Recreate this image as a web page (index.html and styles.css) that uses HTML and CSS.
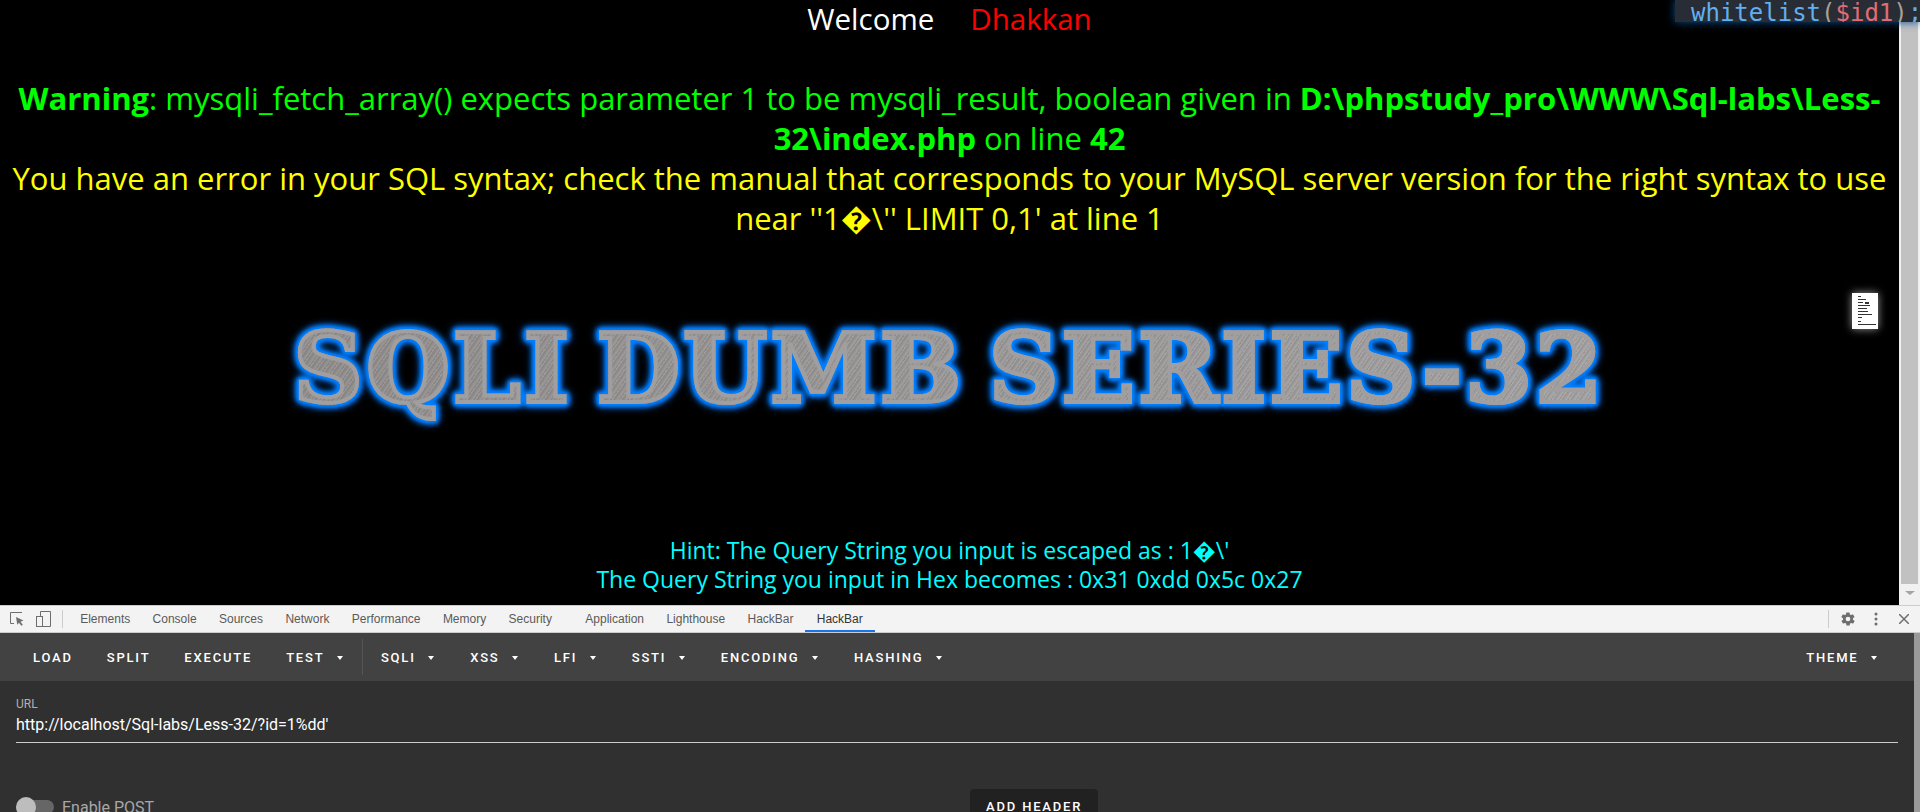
FILE: index.html
```html
<!DOCTYPE html>
<html lang="en">
<head>
    <meta charset="UTF-8">
    <title>Less-32</title>
    <link rel="stylesheet" href="styles.css">
</head>
<body>
    <div class="page">
        <div class="content">
            <p class="welcome"><span class="white">Welcome</span><span class="red">Dhakkan</span></p>
            <div class="messages">
                <p class="green"><b>Warning</b>: mysqli_fetch_array() expects parameter 1 to be mysqli_result, boolean given in <b>D:\phpstudy_pro\WWW\Sql-labs\Less-32\index.php</b> on line <b>42</b></p>
                <p class="yellow">You have an error in your SQL syntax; check the manual that corresponds to your MySQL server version for the right syntax to use near ''1�\'' LIMIT 0,1' at line 1</p>
            </div>
            <div class="logo"><span>SQLI DUMB SERIES-32</span></div>
            <p class="hint">Hint: The Query String you input is escaped as : 1�\'<br>The Query String you input in Hex becomes : 0x31 0xdd 0x5c 0x27</p>
        </div>
        <div class="scrollbar"><div class="thumb-v"></div><div class="arrow-down"></div></div>
        <div class="code-scrap">whitelist<span class="paren">(</span><span class="var">$id1</span><span class="paren">)</span>;</div>
        <svg class="qr-scrap" width="26" height="36" viewBox="0 0 26 36" fill="#333">
            <rect x="6" y="3" width="3" height="1"/><rect x="6" y="6" width="8" height="1"/><rect x="6" y="9" width="5" height="1"/><rect x="13" y="9" width="4" height="2"/><rect x="6" y="12" width="12" height="1"/><rect x="6" y="15" width="9" height="1"/><rect x="6" y="18" width="10" height="1"/><rect x="6" y="21" width="14" height="1"/><rect x="6" y="24" width="4" height="1"/><rect x="6" y="28" width="3" height="1"/><rect x="6" y="31" width="18" height="1"/>
        </svg>
    </div>
    <div class="devtools">
        <div class="tabbar">
            <div class="tool-icons">
                <svg width="14" height="16" viewBox="0 0 14 16" fill="none"><path d="M12 1.500H.5v11H4" stroke="#6e6e6e"/><path d="M6 6l7.500 3.500-3 1.200 2.300 3-1.500 1-2.300-3-1.700 2z" fill="#6e6e6e"/></svg>
                <svg width="15" height="16" viewBox="0 0 15 16" fill="none" stroke="#6e6e6e"><path d="M4.500 5V.5h10v15H6.500"/><rect x=".5" y="5.500" width="6" height="10"/></svg>
            </div>
            <div class="tabs">
                <span>Elements</span><span>Console</span><span>Sources</span><span>Network</span><span>Performance</span><span>Memory</span><span class="wide">Security</span><span>Application</span><span>Lighthouse</span><span>HackBar</span><span class="active">HackBar</span>
            </div>
            <div class="tool-right">
                <svg class="gear" width="16" height="16" viewBox="0 0 24 24" fill="#6e6e6e"><path d="M19.400 13c0-.3.100-.6.100-1s0-.7-.1-1l2.100-1.600c.2-.2.200-.4.100-.6l-2-3.500c-.1-.2-.4-.3-.6-.2l-2.500 1c-.5-.4-1.100-.7-1.700-1l-.4-2.600c0-.3-.2-.4-.5-.4h-4c-.3 0-.5.100-.5.400l-.4 2.600c-.6.300-1.200.6-1.700 1l-2.500-1c-.2-.1-.5 0-.6.200l-2 3.500c-.1.200-.1.500.1.600L4.600 11c0 .3-.1.600-.1 1s0 .7.100 1l-2.100 1.600c-.2.200-.2.400-.1.600l2 3.500c.1.200.4.300.6.200l2.500-1c.5.400 1.100.7 1.700 1l.4 2.600c0 .3.200.4.500.4h4c.3 0 .5-.1.500-.4l.4-2.600c.6-.3 1.200-.6 1.700-1l2.500 1c.2.100.5 0 .6-.2l2-3.500c.1-.2.100-.5-.1-.6zM12 15.500a3.500 3.500 0 1 1 0-7 3.500 3.500 0 0 1 0 7z"/></svg>
                <svg class="dots" width="4" height="14" viewBox="0 0 4 14" fill="#6e6e6e"><circle cx="2" cy="2" r="1.500"/><circle cx="2" cy="7" r="1.500"/><circle cx="2" cy="12" r="1.500"/></svg>
                <svg class="close" width="10" height="10" viewBox="0 0 10 10" stroke="#6e6e6e" stroke-width="1.500"><path d="M0 0l10 10M10 0L0 10"/></svg>
            </div>
        </div>
        <div class="hackbar">
            <div class="hb-main">
                <div class="toolbar">
                    <div class="btn-group">
                        <span class="btn">LOAD</span><span class="btn">SPLIT</span><span class="btn">EXECUTE</span><span class="btn caret">TEST</span>
                    </div>
                    <div class="btn-group sep">
                        <span class="btn caret">SQLI</span><span class="btn caret">XSS</span><span class="btn caret">LFI</span><span class="btn caret">SSTI</span><span class="btn caret">ENCODING</span><span class="btn caret">HASHING</span>
                    </div>
                    <span class="btn caret theme">THEME</span>
                </div>
                <div class="form">
                    <label class="url-label">URL</label>
                    <div class="url-value">http://localhost/Sql-labs/Less-32/?id=1%dd'</div>
                    <div class="options">
                        <div class="switch"><span class="track"><span class="thumb"></span></span><span>Enable POST</span></div>
                        <span class="add-header">ADD HEADER</span>
                    </div>
                </div>
            </div>
            <div class="hb-scroll"></div>
        </div>
    </div>
</body>
</html>
```
FILE: styles.css
```css
*{margin: 0;padding: 0;box-sizing: border-box;}
html,body{height: 100%;overflow: hidden;}
body{display: flex;flex-direction: column;background: #000;font-family: "Open Sans","Noto Sans",sans-serif;}

.page{height: 605px;display: flex;position: relative;background: #000;overflow: hidden;}
.content{flex: 1;min-width: 0;text-align: center;}
.scrollbar{width: 21px;background: #f1f1f1;padding: 0 2px;display: flex;flex-direction: column;align-items: center;}
.thumb-v{height: 584px;width: 100%;background: #c1c1c1;}
.arrow-down{margin-top: 7px;border-left: 5px solid transparent;border-right: 5px solid transparent;border-top: 4px solid #a3a3a3;}
.welcome{height: 37px;line-height: 37px;font-size: 29.500px;}
.white{color: #fff;margin-right: 36px;}
.red{color: #f00;}
.messages{padding-top: 41px;font-size: 31px;line-height: 40px;}
.green{color: #0f0;}
.yellow{color: #ff0;}
.logo{height: 170px;margin-top: 46px;display: flex;align-items: center;justify-content: center;}
.logo span{font-family: "DejaVu Serif",serif;font-weight: bold;font-size: 96px;line-height: 130px;letter-spacing: 3.300px;word-spacing: -12px;white-space: nowrap;
    -webkit-text-fill-color: transparent;-webkit-text-stroke: 4px #a09e9e;
    background: repeating-linear-gradient(125deg,rgba(255,255,255,.12) 0,rgba(0,0,0,.1) 2px,rgba(255,255,255,.05) 5px,rgba(0,0,0,.12) 7px),linear-gradient(90deg,#949090,#a8a6a6);
    -webkit-background-clip: text;background-clip: text;
    filter: drop-shadow(0 0 1px #0080ff) drop-shadow(0 0 1px #0080ff) drop-shadow(0 0 2px #0080ff) drop-shadow(0 0 2px #0080ff) drop-shadow(0 0 3px #0070f0);}
.hint{margin-top: 82px;color: #0ff;font-size: 23px;line-height: 29px;}

.code-scrap{position: absolute;top: 0;right: 0;width: 245px;height: 22px;background: #282c34;color: #61afef;font-family: "DejaVu Sans Mono",monospace;font-size: 24px;line-height: 26px;padding-left: 16px;box-shadow: 0 0 8px #0a4f90;overflow: hidden;white-space: nowrap;}
.paren{color: #ab9f95;}
.var{color: #e06c75;}
.qr-scrap{position: absolute;left: 1852px;top: 293px;background: #fff;box-shadow: 0 0 8px rgba(255,255,255,.6);}

.devtools{flex: 1;display: flex;flex-direction: column;min-height: 0;}
.tabbar{height: 28px;background: #f3f3f3;border-top: 1px solid #ccc;border-bottom: 1px solid #ccc;display: flex;align-items: center;font-family: "Liberation Sans",sans-serif;font-size: 12px;color: #5a5a5a;}
.tool-icons{display: flex;align-items: center;gap: 12px;padding-left: 10px;height: 18px;border-right: 1px solid #ccc;width: 63px;}
.tabs{display: flex;height: 100%;padding-left: 6px;}
.tabs span{display: flex;align-items: center;padding: 0 11.200px;}
.tabs span.wide{margin-right: 11px;}
.tabs span.active{border-bottom: 2px solid #1a73e8;color: #333;padding: 2px 12px 0;}
.tool-right{margin-left: auto;display: flex;align-items: center;height: 18px;padding: 0 11px 0 11px;border-left: 1px solid #ccc;}
.dots{margin-left: 18px;}
.close{margin-left: 21px;}

.hackbar{flex: 1;display: flex;min-height: 0;background: #303030;overflow: hidden;}
.hb-main{flex: 1;min-width: 0;}
.hb-scroll{width: 6px;background: #9a9a9a;}
.toolbar{height: 48px;background: #424242;display: flex;align-items: center;padding-left: 16px;color: #fff;font-family: "Roboto",sans-serif;font-size: 13px;font-weight: 500;letter-spacing: 1.800px;}
.btn-group{display: flex;align-items: center;height: 36px;}
.btn-group.sep{border-left: 1px solid #555;padding-left: 1px;}
.btn{padding: 0 17px;white-space: nowrap;}
.btn.caret::after{content: "";display: inline-block;margin: 0 2px 0 12.500px;vertical-align: 2px;border-left: 3.500px solid transparent;border-right: 3.500px solid transparent;border-top: 4px solid #fff;}
.theme{margin-left: auto;padding-right: 35px;}
.form{padding: 16px 16px 0;color: #fff;font-family: "Roboto",sans-serif;}
.url-label{display: block;font-size: 12px;color: #b0b0b0;line-height: 14px;}
.url-value{font-size: 16px;line-height: 22px;height: 32px;padding-top: 3px;border-bottom: 1px solid #ccc;}
.options{display: flex;align-items: center;margin-top: 46px;height: 36px;}
.switch{display: flex;align-items: center;gap: 8px;color: #a8a8a8;font-size: 16px;}
.track{display: block;width: 36px;height: 14px;margin-left: 2px;background: #666;border-radius: 7px;position: relative;}
.thumb{position: absolute;left: -2px;top: -3px;width: 20px;height: 20px;border-radius: 50%;background: #bdbdbd;}
.add-header{margin-left: 816px;background: #212121;color: #fff;font-size: 13px;font-weight: 500;letter-spacing: 1.800px;padding: 0 16px;height: 36px;line-height: 36px;border-radius: 4px;}
```
